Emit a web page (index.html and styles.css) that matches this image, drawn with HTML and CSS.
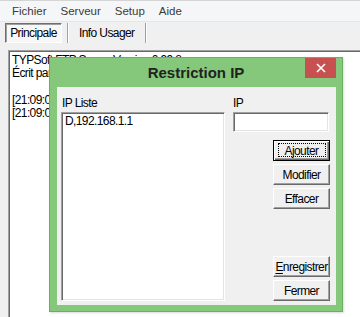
FILE: index.html
```html
<!DOCTYPE html>
<html lang="fr">
<head>
    <meta charset="UTF-8">
    <title>TYPSoft FTP Server</title>
    <link rel="stylesheet" href="styles.css">
</head>
<body>
    <div class="menubar">
        <span class="menu-item">Fichier</span>
        <span class="menu-item">Serveur</span>
        <span class="menu-item">Setup</span>
        <span class="menu-item">Aide</span>
    </div>

    <div class="tabs">
        <span class="tab tab-on">Principale</span>
        <span class="tab-sep"></span>
        <span class="tab">Info Usager</span>
        <span class="tab-sep"></span>
    </div>

    <div class="main">
        <div class="gutter"></div>
        <div class="log">
            <div>TYPSoft FTP Server Version 0.99.8</div>
            <div>Écrit par Jean-Philippe Lemieux</div>
            <div>&nbsp;</div>
            <div>[21:09:07] Serveur démarré</div>
            <div>[21:09:07] En attente de connexion</div>
        </div>
    </div>

    <!-- boite de dialogue par-dessus la fenetre -->
    <div class="dialog">
        <div class="titlebar">
            <span class="title">Restriction IP</span>
            <span class="close">
                <svg width="10" height="10" viewBox="0 0 10 10">
                    <path d="M1 1 L9 9 M9 1 L1 9" stroke="#fff" stroke-width="1.6" fill="none"/>
                </svg>
            </span>
        </div>
        <div class="dialog-body">
            <div class="col-left">
                <div class="label">IP Liste</div>
                <div class="listbox">
                    <div class="list-item">D,192.168.1.1</div>
                </div>
            </div>
            <div class="col-right">
                <div class="label">IP</div>
                <div class="field"></div>
                <button class="btn btn-default">Ajouter</button>
                <button class="btn">Modifier</button>
                <button class="btn">Effacer</button>
                <button class="btn btn-bottom"><u>E</u>nregistrer</button>
                <button class="btn">Fermer</button>
            </div>
        </div>
    </div>
</body>
</html>
```

FILE: styles.css
```css
body {
    margin: 0;
    width: 360px;
    height: 317px;
    overflow: hidden;
    position: relative;
    background-color: #f0f0f0;
    font-family: "Liberation Sans", Arial, sans-serif;
    font-size: 12px;
    letter-spacing: -0.6px;
    color: #000;
}

.menubar {
    height: 22px;
    box-sizing: border-box;
    display: flex;
    align-items: center;
    gap: 14px;
    padding-left: 12px;
    background-color: #f5f6f7;
    border-top: 1px solid #d4d4d4;
    border-bottom: 1px solid #e6e6e6;
    font-size: 11.5px;
    letter-spacing: 0;
    color: #3a3a3a;
}

.tabs {
    height: 28px;
    box-sizing: border-box;
    padding: 1px 0 0 5px;
    display: flex;
    align-items: flex-start;
}

.tab {
    height: 20px;
    line-height: 18px;
    box-sizing: border-box;
    border: 1px solid transparent;
    padding: 0 10px 0 9px;
}

.tab-on {
    width: 57px;
    padding: 0;
    text-align: center;
    margin-right: 5px;
    background-color: #f7f7f7;
    border-color: #6e6e6e #fff #fff #6e6e6e;
    box-shadow: inset 1px 1px #a0a0a0;
}

.tab-sep {
    width: 1px;
    height: 20px;
    background-color: #a0a0a0;
    border-right: 1px solid #fff;
}

.main {
    display: flex;
    height: 267px;
}

.gutter {
    width: 8px;
    background-color: #f0f0f0;
}

.log {
    flex: 1;
    background-color: #fff;
    border-top: 1px solid #a0a0a0;
    border-left: 1px solid #a0a0a0;
    box-shadow: inset 1px 1px #696969;
    padding: 3px 0 0 3px;
    line-height: 13.3px;
    white-space: nowrap;
}

.dialog {
    position: absolute;
    left: 49px;
    top: 57px;
    width: 294px;
    height: 255px;
    box-sizing: border-box;
    border: 1px solid #6fab65;
    background-color: #85c87b;
    padding: 0 6px 6px 7px;
    display: flex;
    flex-direction: column;
    box-shadow: 1px 1px 2px rgba(0, 0, 0, 0.15);
}

.titlebar {
    height: 29px;
    margin: 0 -6px 0 -7px;
    display: flex;
    justify-content: center;
    align-items: center;
    position: relative;
}

.title {
    font-size: 15px;
    font-weight: bold;
    letter-spacing: 0;
    color: #222;
}

.close {
    position: absolute;
    right: 6px;
    top: 0;
    width: 31px;
    height: 20px;
    background-color: #c75050;
    display: flex;
    align-items: center;
    justify-content: center;
}

.dialog-body {
    flex: 1;
    background-color: #f0f0f0;
    padding: 9px 6px 4px 4px;
    display: grid;
    grid-template-columns: 164px 97px;
    column-gap: 8px;
}

.col-left,
.col-right {
    display: flex;
    flex-direction: column;
}

.col-right {
    align-items: flex-end;
}

.label {
    height: 14px;
    line-height: 14px;
    margin-bottom: 2px;
    padding-left: 1px;
    align-self: stretch;
}

.col-right .label {
    padding-left: 0;
}

.listbox {
    flex: 1;
    background-color: #fff;
    border: 1px solid;
    border-color: #a0a0a0 #fff #fff #a0a0a0;
    box-shadow: inset 1px 1px #696969, inset -1px -1px #e3e3e3;
    padding: 1px 0 0 3px;
}

.list-item {
    line-height: 14px;
}

.field {
    width: 96px;
    height: 20px;
    box-sizing: border-box;
    align-self: flex-start;
    background-color: #fff;
    border: 1px solid;
    border-color: #a0a0a0 #fff #fff #a0a0a0;
    box-shadow: inset 1px 1px #696969, inset -1px -1px #e3e3e3;
    margin-bottom: 8px;
}

.btn {
    position: relative;
    width: 57px;
    height: 21px;
    box-sizing: border-box;
    margin: 0 0 3px 0;
    padding: 0;
    font-family: inherit;
    font-size: 12px;
    letter-spacing: -0.6px;
    color: #000;
    background-color: #f0f0f0;
    border: 1px solid;
    border-color: #fff #696969 #696969 #fff;
    box-shadow: inset -1px -1px #a0a0a0;
}

.btn u {
    text-underline-offset: 2px;
}

.btn-default {
    border-color: #000;
    box-shadow: inset 1px 1px #fff, inset -1px -1px #696969, inset -2px -2px #a0a0a0;
}

.btn-default::after {
    content: "";
    position: absolute;
    left: 4px;
    right: 3px;
    top: 2px;
    bottom: 3px;
    border: 1px dotted #000;
}

.btn-bottom {
    margin-top: auto;
}

.btn:last-child {
    margin-bottom: 0;
}
```
